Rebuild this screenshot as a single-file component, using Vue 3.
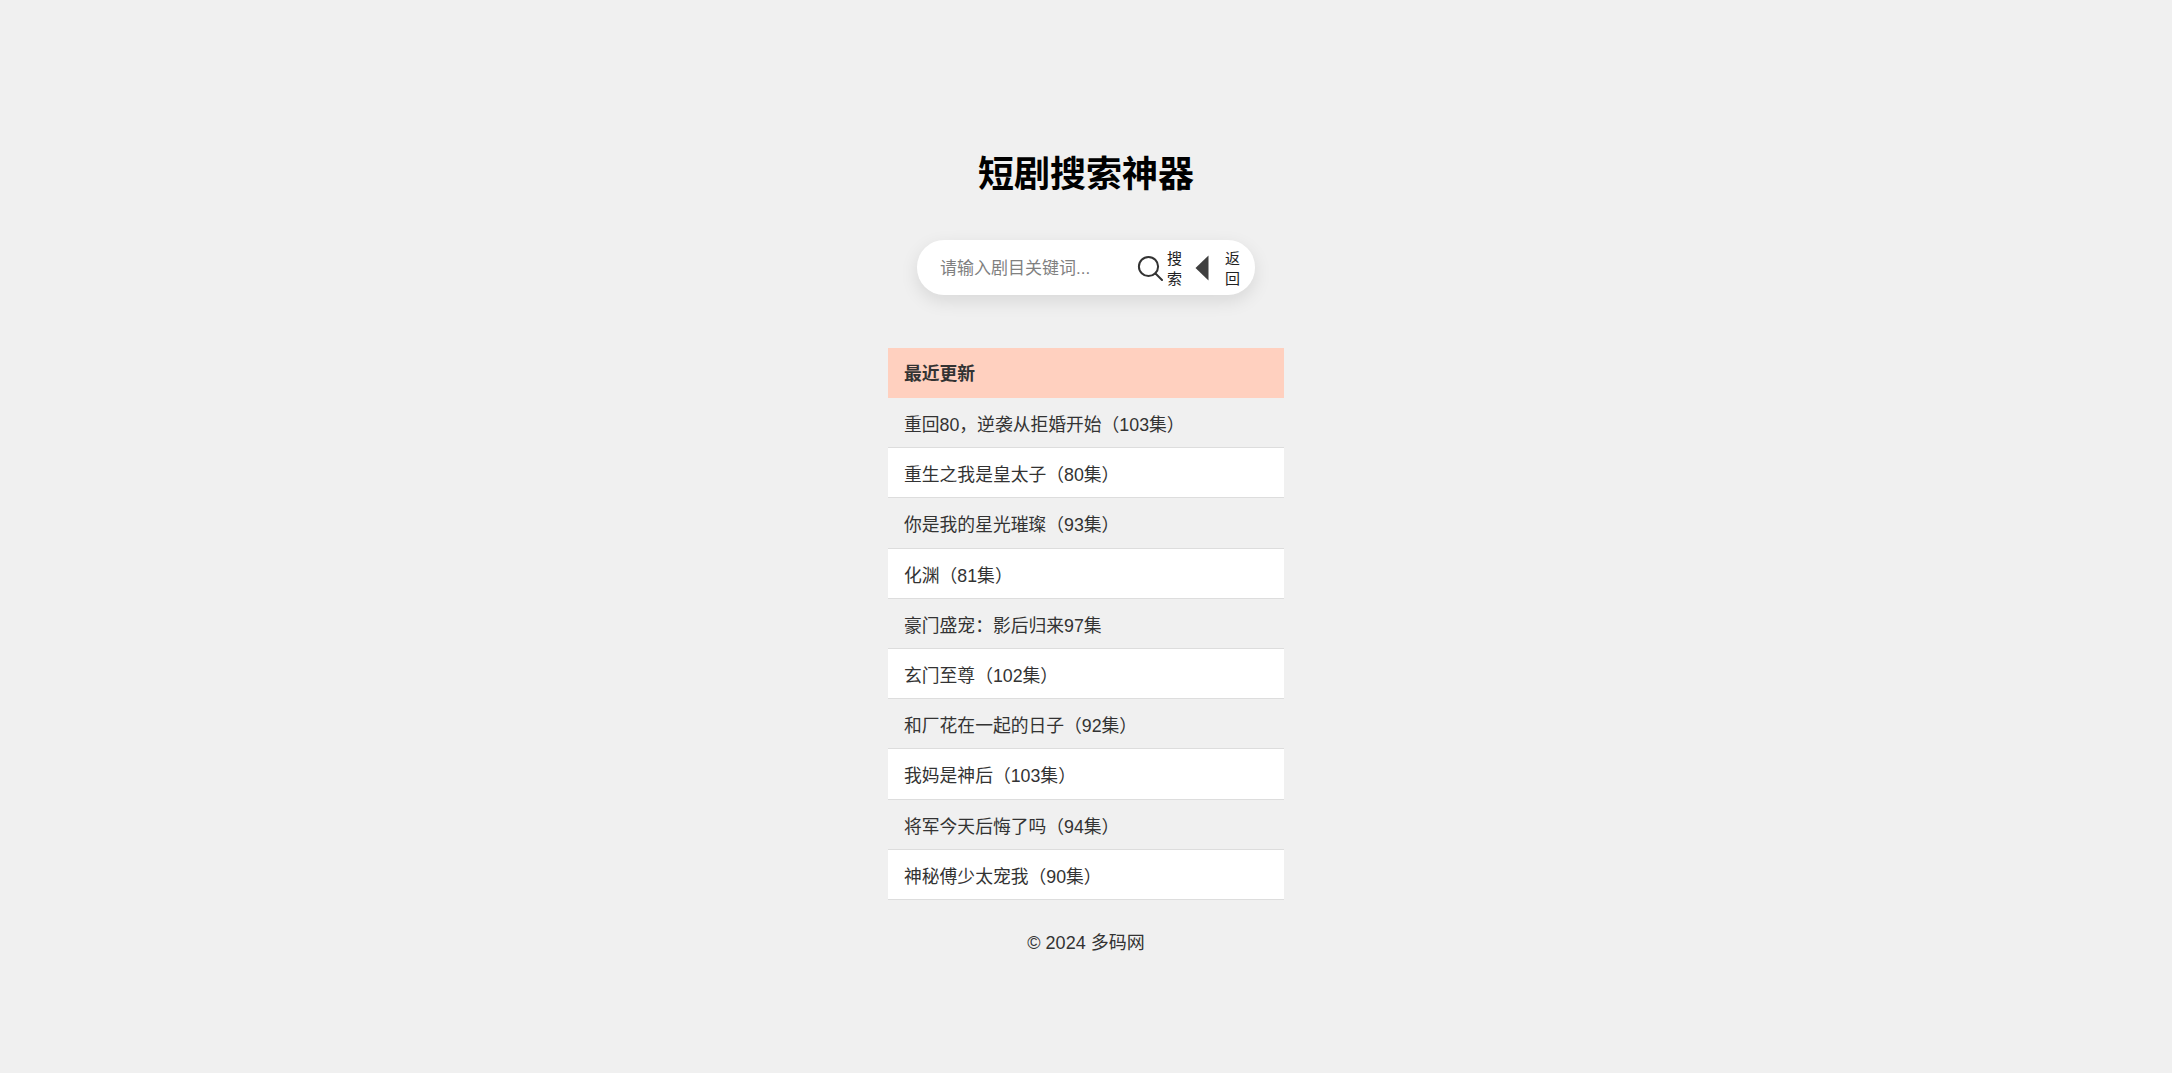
<template>
  <div class="page">
    <h1>短剧搜索神器</h1>

    <form class="search" @submit.prevent>
      <input type="text" placeholder="请输入剧目关键词..." />
      <button type="button" class="btn btn-search">
        <svg width="26" height="26" viewBox="0 0 26 26" fill="none" stroke="#333" stroke-width="2">
          <circle cx="11.5" cy="11.5" r="9.6" />
          <path d="M18.5 18.5 L25 25" stroke-linecap="round" />
        </svg>
        <span class="label">搜索</span>
      </button>
      <button type="button" class="btn btn-back">
        <svg width="14" height="26" viewBox="0 0 14 26">
          <path d="M13.5 0.5 V25.5 L0.5 13 Z" fill="#3f3f3f" />
        </svg>
        <span class="label">返回</span>
      </button>
    </form>

    <div class="list">
      <div class="row head">最近更新</div>
      <div v-for="item in dramas" :key="item" class="row">{{ item }}</div>
    </div>

    <p class="footer">© 2024 多码网</p>
  </div>
</template>

<script setup>
const dramas = [
  '重回80，逆袭从拒婚开始（103集）',
  '重生之我是皇太子（80集）',
  '你是我的星光璀璨（93集）',
  '化渊（81集）',
  '豪门盛宠：影后归来97集',
  '玄门至尊（102集）',
  '和厂花在一起的日子（92集）',
  '我妈是神后（103集）',
  '将军今天后悔了吗（94集）',
  '神秘傅少太宠我（90集）'
]
</script>

<style>
html,
body {
  margin: 0;
  background: #f0f0f0;
}
</style>

<style scoped>
.page {
  display: flex;
  flex-direction: column;
  align-items: center;
  min-height: 1073px;
  font-family: "Liberation Sans", "Noto Sans CJK SC", sans-serif;
  color: #333;
}

h1 {
  margin: 151px 0 0;
  font-size: 36px;
  line-height: 48px;
  font-weight: 700;
  color: #000;
}

.search {
  display: flex;
  align-items: center;
  box-sizing: border-box;
  width: 338px;
  height: 55px;
  margin-top: 41px;
  background: #fff;
  border-radius: 27px;
  box-shadow: 0 6px 18px rgba(0, 0, 0, 0.1);
}

.search input {
  width: 197px;
  margin-left: 23px;
  padding: 2px 0 0;
  border: none;
  outline: none;
  background: transparent;
  font-family: inherit;
  font-size: 17px;
}

.search input::placeholder {
  color: #808080;
}

.btn {
  display: flex;
  align-items: center;
  padding: 0;
  border: none;
  background: none;
  color: #222;
  font-family: inherit;
}

.label {
  width: 15px;
  font-size: 15px;
  line-height: 20px;
  padding-top: 3px;
  text-align: center;
}

.btn-search .label {
  margin-left: 4px;
}

.btn-back {
  margin-left: 13px;
}

.btn-back .label {
  margin-left: 16px;
}

.list {
  width: 396px;
  margin-top: 53px;
}

.row {
  box-sizing: border-box;
  height: 50.2px;
  padding: 0 16px;
  line-height: 54px;
  font-size: 17.8px;
  color: #333;
  border-bottom: 1px solid #ddd;
}

.row:nth-child(odd) {
  background: #fff;
}

.row.head {
  height: 50px;
  background: #ffd0bf;
  font-weight: 700;
  line-height: 52px;
  border-bottom: none;
}

.footer {
  margin: 31px 0 0;
  font-size: 18px;
  line-height: 24px;
  color: #333;
}
</style>
